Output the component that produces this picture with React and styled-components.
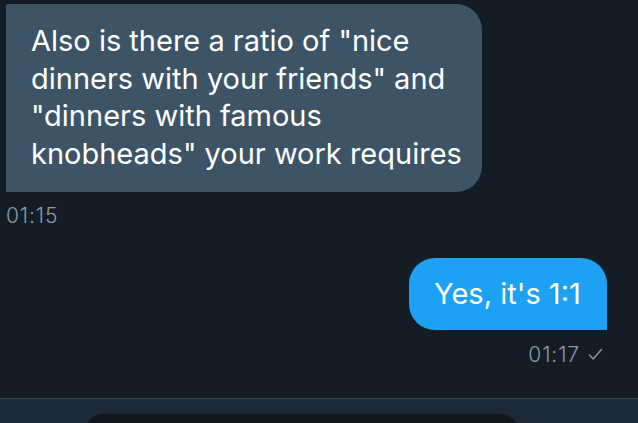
import styled, { createGlobalStyle } from "styled-components";

const Global = createGlobalStyle`
  html, body {
    margin: 0;
    padding: 0;
    background: #141d26;
  }
  body {
    font-family: Inter, "Open Sans", "Liberation Sans", sans-serif;
    -webkit-font-smoothing: antialiased;
  }
`;

const Screen = styled.div`
  width: 638px;
  height: 423px;
  background: #141d26;
  display: flex;
  flex-direction: column;
  overflow: hidden;
`;

const Thread = styled.div`
  flex: 1;
  display: flex;
  flex-direction: column;
  padding: 4px 31px 0 6px;
`;

const Group = styled.div`
  display: flex;
  flex-direction: column;
  align-items: ${(p) => (p.$mine ? "flex-end" : "flex-start")};
  margin-top: ${(p) => p.$gap || 0}px;
`;

const Bubble = styled.div`
  box-sizing: border-box;
  width: ${(p) => p.$width}px;
  padding: ${(p) => p.$pad};
  background: ${(p) => (p.$mine ? "#1da1f2" : "#3d5466")};
  color: #fff;
  font-size: 29px;
  line-height: 37.5px;
  border-radius: ${(p) => (p.$mine ? "26px 26px 0 26px" : "2px 26px 26px 0")};
`;

const Meta = styled.div`
  display: flex;
  align-items: center;
  gap: 8px;
  height: 24px;
  margin-top: ${(p) => p.$top}px;
  padding-right: ${(p) => p.$right || 0}px;
  color: #8899a6;
  font-size: 21px;
  font-weight: 300;
  letter-spacing: 0.9px;
`;

const Composer = styled.div`
  box-sizing: border-box;
  height: 25px;
  border-top: 1px solid #38444d;
  background: #1c2938;
  display: flex;
  padding: 15px 0 0 84px;
`;

const Input = styled.div`
  flex: none;
  width: 436px;
  height: 40px;
  border-radius: 22px;
  background: #10171e;
`;

function Check() {
  return (
    <svg width="15" height="13" viewBox="0 0 15 13" fill="none">
      <path d="M1.5 7 L5.2 11 L13.5 1.5" stroke="#8899a6" strokeWidth="1.4" strokeLinecap="round" strokeLinejoin="round" />
    </svg>
  );
}

export default function App() {
  return (
    <>
      <Global />
      <Screen>
        <Thread>
          <Group>
            <Bubble $width={476} $pad="18px 10px 20px 25px">
              Also is there a ratio of "nice
              <br />
              dinners with your friends" and
              <br />
              "dinners with famous
              <br />
              knobheads" your work requires
            </Bubble>
            <Meta $top={11}>01:15</Meta>
          </Group>
          <Group $mine $gap={31}>
            <Bubble $mine $width={198} $pad="17px 0 17.5px 25px">
              Yes, it's 1:1
            </Bubble>
            <Meta $mine $top={12} $right={4}>
              01:17 <Check />
            </Meta>
          </Group>
        </Thread>
        <Composer>
          <Input />
        </Composer>
      </Screen>
    </>
  );
}
